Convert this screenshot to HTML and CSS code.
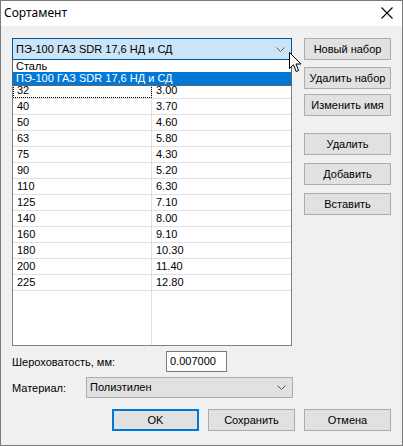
FILE: index.html
```html
<!DOCTYPE html>
<html lang="ru">
<head>
<meta charset="utf-8">
<title>Сортамент</title>
<link rel="stylesheet" href="styles.css">
</head>
<body>
<div class="window">
  <div class="titlebar">
    <span class="title">Сортамент</span>
    <svg class="close" width="12" height="12" viewBox="0 0 12 12"><path d="M0.5 0.5 L11.5 11.5 M11.5 0.5 L0.5 11.5" stroke="#000" stroke-width="1.1" fill="none"/></svg>
  </div>
  <div class="content">
    <div class="main">
      <div class="left">
        <div class="combo">
          <span>ПЭ-100 ГАЗ SDR 17,6 НД и СД</span>
          <svg class="chev" width="9" height="5" viewBox="0 0 9 5"><path d="M0.5 0.5 L4.5 4.5 L8.5 0.5" stroke="#5a5a5a" fill="none"/></svg>
        </div>
        <div class="grid">
          <div class="grid-head"></div>
          <div class="row"><div class="c1 focus">32</div><div class="c2">3.00</div></div>
          <div class="row"><div class="c1">40</div><div class="c2">3.70</div></div>
          <div class="row"><div class="c1">50</div><div class="c2">4.60</div></div>
          <div class="row"><div class="c1">63</div><div class="c2">5.80</div></div>
          <div class="row"><div class="c1">75</div><div class="c2">4.30</div></div>
          <div class="row"><div class="c1">90</div><div class="c2">5.20</div></div>
          <div class="row"><div class="c1">110</div><div class="c2">6.30</div></div>
          <div class="row"><div class="c1">125</div><div class="c2">7.10</div></div>
          <div class="row"><div class="c1">140</div><div class="c2">8.00</div></div>
          <div class="row"><div class="c1">160</div><div class="c2">9.10</div></div>
          <div class="row"><div class="c1">180</div><div class="c2">10.30</div></div>
          <div class="row"><div class="c1">200</div><div class="c2">11.40</div></div>
          <div class="row"><div class="c1">225</div><div class="c2">12.80</div></div>
        </div>
        <div class="dropdown">
          <div class="item">Сталь</div>
          <div class="item selected">ПЭ-100 ГАЗ SDR 17,6 НД и СД</div>
        </div>
        <svg class="cursor" width="13" height="21" viewBox="0 0 13 21"><path d="M0.5 0.5 L0.5 16.5 L4.5 12.8 L7.2 19.5 L9.6 18.5 L7 12 L12 12 Z" fill="#fff" stroke="#000" stroke-width="1" stroke-linejoin="miter"/></svg>
      </div>
      <div class="right">
        <button class="btn">Новый набор</button>
        <button class="btn b2">Удалить набор</button>
        <button class="btn b3">Изменить имя</button>
        <button class="btn b4">Удалить</button>
        <button class="btn b5">Добавить</button>
        <button class="btn b5">Вставить</button>
      </div>
    </div>
    <div class="field rough">
      <span class="lbl lbl1">Шероховатость, мм:</span>
      <div class="input">0.007000</div>
    </div>
    <div class="field mat">
      <span class="lbl lbl2">Материал:</span>
      <div class="select">
        <span>Полиэтилен</span>
        <svg class="chev" width="9" height="5" viewBox="0 0 9 5"><path d="M0.5 0.5 L4.5 4.5 L8.5 0.5" stroke="#5a5a5a" fill="none"/></svg>
      </div>
    </div>
    <div class="actions">
      <button class="btn ok">OK</button>
      <button class="btn">Сохранить</button>
      <button class="btn">Отмена</button>
    </div>
  </div>
</div>
</body>
</html>
```
FILE: styles.css
```css
* { box-sizing: border-box; }
html, body { margin: 0; padding: 0; }
body {
  font-family: "Liberation Sans", Arial, sans-serif;
  font-size: 11px;
  color: #000;
  background: #f0f0f0;
}
.window {
  width: 403px;
  height: 446px;
  border: 1px solid #7a7a7a;
  background: #f0f0f0;
  overflow: hidden;
}
.titlebar {
  height: 25px;
  background: #fff;
  display: flex;
  align-items: center;
  justify-content: space-between;
  padding: 0 9px 0 3px;
}
.title {
  font-family: "Noto Sans", "Open Sans", sans-serif;
  font-size: 12px;
  line-height: 14px;
  margin-top: -2px;
}
.close { display: block; margin-top: -1px; }
.content {
  padding: 12px 0 0 11px;
}
.main {
  display: flex;
  gap: 12px;
}
.left {
  position: relative;
  width: 280px;
}
.combo {
  height: 22px;
  background: #cce4f7;
  border: 1px solid #005499;
  display: flex;
  align-items: center;
  justify-content: space-between;
  padding: 0 6px 0 3px;
}
.combo span, .select span { line-height: 13px; }
.chev { display: block; }
.grid {
  height: 286px;
  border: 1px solid #828282;
  border-top: none;
  background: #fff linear-gradient(to right, transparent 138px, #e0e0e0 138px, #e0e0e0 139px, transparent 139px);
}
.grid-head { height: 23px; }
.row {
  display: flex;
  height: 16px;
  border-bottom: 1px solid #e0e0e0;
}
.c1 {
  width: 139px;
  padding-left: 4px;
  line-height: 15px;
}
.c2 {
  padding-left: 4px;
  line-height: 15px;
}
.focus {
  outline: 1px dotted #000;
  outline-offset: -1px;
  padding-left: 4px;
}
.dropdown {
  position: absolute;
  left: 0;
  top: 22px;
  width: 280px;
  background: #fff;
  border: 1px solid #646464;
  border-top: none;
}
.item {
  height: 12px;
  line-height: 12px;
  padding-left: 3px;
}
.item.selected {
  height: 13px;
  line-height: 13px;
  background: #0078d7;
  color: #fff;
}
.cursor {
  position: absolute;
  left: 277px;
  top: 14px;
}
.right {
  width: 87px;
  display: flex;
  flex-direction: column;
}
.btn {
  width: 87px;
  height: 22px;
  background: #e1e1e1;
  border: 1px solid #adadad;
  font-family: "Liberation Sans", Arial, sans-serif;
  font-size: 11px;
  color: #000;
  padding: 0;
  margin: 0;
  line-height: 20px;
}
.b2 { margin-top: 7px; }
.b3 { margin-top: 5px; }
.b4 { margin-top: 17px; }
.b5 { margin-top: 8px; }
.field {
  display: flex;
  align-items: center;
  height: 21px;
}
.rough { margin-top: 5px; }
.mat { margin-top: 5px; }
.lbl1 { width: 154px; }
.lbl2 { width: 74px; }
.input {
  width: 61px;
  height: 21px;
  background: #fff;
  border: 1px solid #7a7a7a;
  padding-left: 3px;
  line-height: 19px;
}
.select {
  width: 207px;
  height: 21px;
  background: #e1e1e1;
  border: 1px solid #adadad;
  display: flex;
  align-items: center;
  justify-content: space-between;
  padding: 0 6px 0 3px;
}
.actions {
  margin-top: 11px;
  padding-left: 100px;
  display: flex;
  gap: 9px;
}
.ok {
  border: 2px solid #0078d7;
  line-height: 18px;
}
```
